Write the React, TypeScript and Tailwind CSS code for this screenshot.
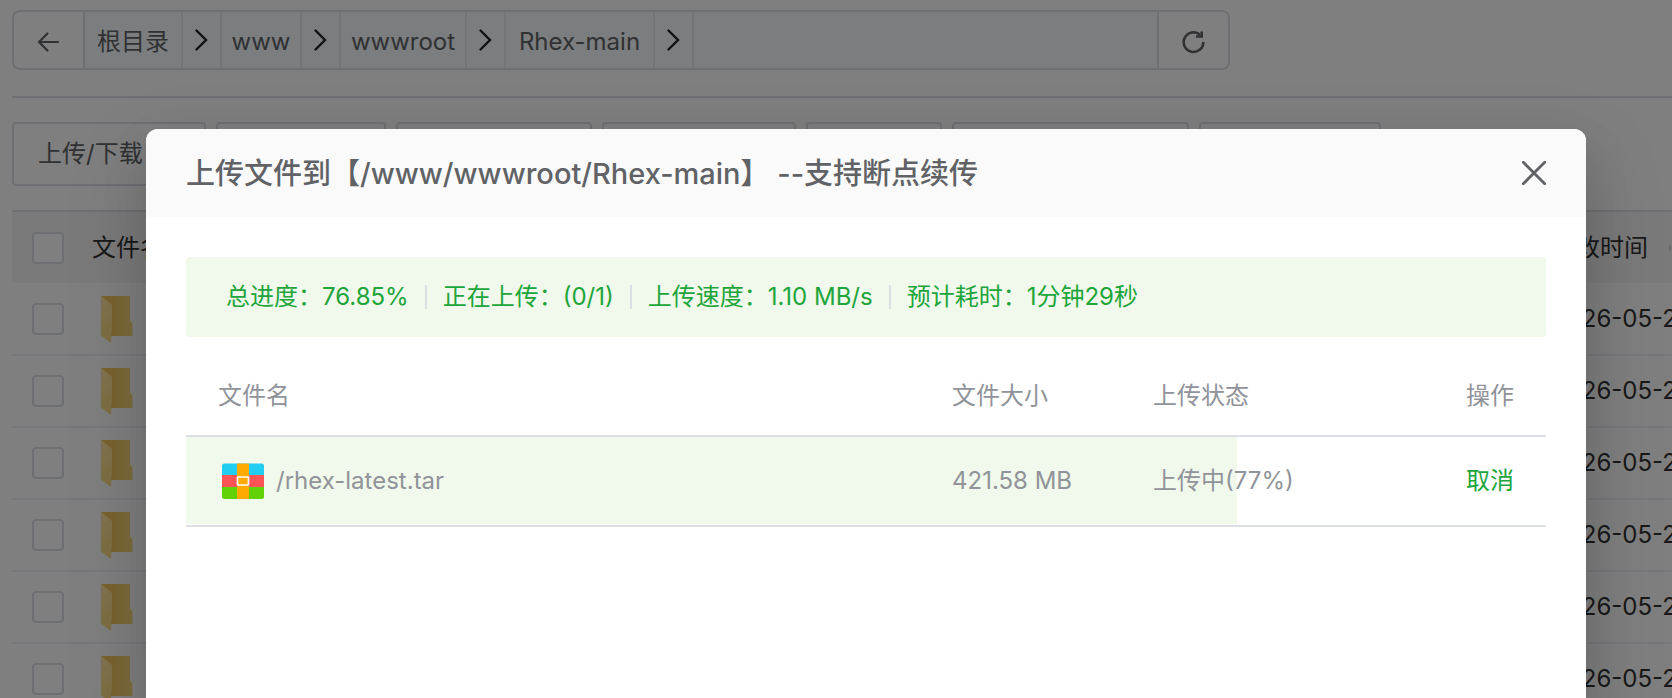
import { type ReactNode, Fragment } from 'react'

const crumbs = [
  { label: '根目录', width: 'w-[98px]' },
  { label: 'www', width: 'w-[80px]' },
  { label: 'wwwroot', width: 'w-[126px]' },
  { label: 'Rhex-main', width: 'w-[149px]' },
]

const tools = [
  { id: 'transfer', label: '上传/下载', width: 'w-[194px]' },
  { id: 'tool-2', label: '', width: 'w-[170px]' },
  { id: 'tool-3', label: '', width: 'w-[196px]' },
  { id: 'tool-4', label: '', width: 'w-[194px]' },
  { id: 'tool-5', label: '', width: 'w-[136px]' },
  { id: 'tool-6', label: '', width: 'w-[237px]' },
  { id: 'tool-7', label: '', width: 'w-[182px]' },
]

const folders = [1, 2, 3, 4, 5, 6].map((id) => ({ id, modified: '2026-05-2' }))

const uploads = [{ name: '/rhex-latest.tar', size: '421.58 MB', progress: 77.3 }]

const stats = [
  '总进度：76.85%',
  '正在上传：(0/1)',
  '上传速度：1.10 MB/s',
  '预计耗时：1分钟29秒',
]

function ChevronIcon() {
  return (
    <svg className="h-6 w-4" viewBox="0 0 16 24" fill="none" stroke="#222" strokeWidth="2.4" strokeLinecap="round" aria-hidden>
      <path d="M2.500 2.500L12 12L2.500 21.500" />
    </svg>
  )
}

function BackIcon() {
  return (
    <svg className="h-6 w-6" viewBox="0 0 24 24" fill="none" stroke="#606266" strokeWidth="2.2" strokeLinecap="round" aria-hidden>
      <path d="M21 12H2M10.500 3.500L2 12L10.500 20.500" />
    </svg>
  )
}

function RefreshIcon() {
  return (
    <svg className="h-6 w-6" viewBox="0 0 24 24" fill="none" stroke="#606266" strokeWidth="2.6" aria-hidden>
      <path d="M21.300 12A9.800 9.800 0 1 1 18 4.800" />
      <path d="M19.700 1.500V6.500H14" />
    </svg>
  )
}

function CloseIcon() {
  return (
    <svg className="h-6 w-6" viewBox="0 0 24 24" fill="none" stroke="#606266" strokeWidth="2.8" strokeLinecap="round" aria-hidden>
      <path d="M1.300 1.300L22.700 22.700M22.700 1.300L1.300 22.700" />
    </svg>
  )
}

function FolderIcon() {
  return (
    <svg className="h-12 w-8" viewBox="0 0 32 48" aria-hidden>
      <defs>
        <linearGradient id="folder-back" x1="0" y1="0" x2="1" y2="0">
          <stop offset="0.300" stopColor="#f0c55c" />
          <stop offset="1" stopColor="#fbdc80" />
        </linearGradient>
        <linearGradient id="folder-flap" x1="0" y1="0" x2="0" y2="1">
          <stop offset="0" stopColor="#ffe8a4" />
          <stop offset="1" stopColor="#fbda7c" />
        </linearGradient>
      </defs>
      <path d="M0.500 1H29V25.500L31.500 28.500V41H0.500z" fill="url(#folder-back)" />
      <path d="M0.500 1.500L10 9Q11 10 11 12V34L10.200 36V48L1.500 41.500Q0.500 40.500 0.500 39.500z" fill="url(#folder-flap)" />
    </svg>
  )
}

function ArchiveIcon() {
  return (
    <svg className="h-9 w-[42px]" viewBox="0 0 42 36" aria-hidden>
      <path d="M0 12V3Q0 0.500 2.500 0.500H39.500Q42 0.500 42 3V12z" fill="#22cdf2" />
      <path d="M0 12H42V24H0z" fill="#ff5456" />
      <path d="M0 24H42V33.500Q42 36 39.500 36H2.500Q0 36 0 33.500z" fill="#60d207" />
      <path d="M15 0.500H27V36H15z" fill="#ffaa00" />
      <rect x="15.500" y="14" width="11" height="8" rx="0.500" fill="#ffaa00" stroke="#fff" strokeWidth="1.700" />
    </svg>
  )
}

function SortIcon() {
  return (
    <svg className="h-5 w-3" viewBox="0 0 12 20" fill="#c0c4cc" aria-hidden>
      <path d="M6 2L12 8.500H0zM6 18L12 11.500H0z" />
    </svg>
  )
}

function Checkbox({ label }: { label: string }) {
  return (
    <input
      type="checkbox"
      aria-label={label}
      className="block h-8 w-8 appearance-none rounded border-2 border-[#dcdfe6] bg-white"
    />
  )
}

function PathBar() {
  return (
    <nav className="flex h-[60px] w-full max-w-[1218px] overflow-hidden rounded-lg border-2 border-[#dcdfe6]" aria-label="路径">
      <button type="button" aria-label="返回" className="flex w-[71px] items-center justify-center border-r-2 border-[#dcdfe6] pt-1">
        <BackIcon />
      </button>
      <div className="flex flex-1 bg-[#f9fbfd]">
        {crumbs.map((crumb) => (
          <Fragment key={crumb.label}>
            <a
              href="#"
              className={`flex items-center justify-center border-r-2 border-[#e8eaee] pt-1 text-[#606266] ${crumb.width}`}
            >
              {crumb.label}
            </a>
            <span className="flex w-[39px] items-center justify-center border-r-2 border-[#e8eaee]">
              <ChevronIcon />
            </span>
          </Fragment>
        ))}
      </div>
      <button type="button" aria-label="刷新" className="flex w-[71px] items-center justify-center border-l-2 border-[#dcdfe6] pt-1">
        <RefreshIcon />
      </button>
    </nav>
  )
}

function FileTable() {
  return (
    <table className="mt-6 w-full table-fixed border-t-2 border-[#dcdfe6] text-left">
      <colgroup>
        <col className="w-[80px]" />
        <col />
        <col className="w-[120px]" />
      </colgroup>
      <thead>
        <tr className="h-[72px] bg-[#f5f5f5]">
          <th className="pl-5"><Checkbox label="全选" /></th>
          <th className="font-normal">文件名</th>
          <th className="font-normal whitespace-nowrap">
            <span className="flex items-center gap-5">
              修改时间
              <SortIcon />
            </span>
          </th>
        </tr>
      </thead>
      <tbody>
        {folders.map((folder) => (
          <tr key={folder.id} className="h-[72px] border-b-2 border-[#ebeef5]">
            <td className="pl-5"><Checkbox label="选择" /></td>
            <td className="pl-[9px]"><FolderIcon /></td>
            <td className="whitespace-nowrap">{folder.modified}</td>
          </tr>
        ))}
      </tbody>
    </table>
  )
}

function Cell({ children }: { children: ReactNode }) {
  return <td className="px-8 whitespace-nowrap">{children}</td>
}

function UploadDialog() {
  return (
    <section
      role="dialog"
      aria-labelledby="upload-title"
      className="flex-1 overflow-hidden rounded-t-xl bg-white text-[#909399] shadow-[0_32px_80px_8px_rgba(0,0,0,0.12),0_20px_48px_rgba(0,0,0,0.1)]"
    >
      <header className="flex h-[88px] items-center justify-between bg-[#fafafa] px-10">
        <h2 id="upload-title" className="pt-0.5 text-[29px] font-medium whitespace-pre text-[#606266]">
          上传文件到【/www/wwwroot/Rhex-main】 --支持断点续传
        </h2>
        <button type="button" aria-label="关闭">
          <CloseIcon />
        </button>
      </header>
      <div className="p-10">
        <div className="flex h-20 items-center rounded bg-[#f0f9eb] px-10 text-[#20a53a]">
          {stats.map((stat, i) => (
            <Fragment key={stat}>
              {i > 0 && <span className="mx-4 h-6 w-0.5 bg-[#dcdfe6]" />}
              <span>{stat}</span>
            </Fragment>
          ))}
        </div>
        <table className="mt-5 w-full table-fixed text-left">
          <colgroup>
            <col />
            <col className="w-[201px]" />
            <col className="w-[260px]" />
            <col className="w-[165px]" />
          </colgroup>
          <thead>
            <tr className="h-[79px] border-b-2 border-[#dcdfe6]">
              <th className="px-8 font-normal">文件名</th>
              <th className="px-8 font-normal">文件大小</th>
              <th className="px-8 font-normal">上传状态</th>
              <th className="px-8 text-right font-normal">操作</th>
            </tr>
          </thead>
          <tbody>
            {uploads.map((file) => (
              <tr
                key={file.name}
                className="h-[90px] border-b-2 border-[#dcdfe6] bg-[linear-gradient(#f0f9eb,#f0f9eb)] bg-no-repeat"
                style={{ backgroundSize: `${file.progress}% 100%` }}
              >
                <Cell>
                  <span className="flex items-center gap-3 pl-1">
                    <ArchiveIcon />
                    {file.name}
                  </span>
                </Cell>
                <Cell>{file.size}</Cell>
                <Cell>上传中({Math.round(file.progress)}%)</Cell>
                <td className="px-8 text-right">
                  <button type="button" className="text-[#20a53a]">取消</button>
                </td>
              </tr>
            ))}
          </tbody>
        </table>
      </div>
    </section>
  )
}

export default function App() {
  return (
    <div className="relative h-screen overflow-hidden bg-white font-[Inter,'Noto_Sans_CJK_SC',sans-serif] text-2xl text-[#333]">
      <main className="pt-2.5 pl-3">
        <PathBar />
        <hr className="mt-[26px] border-t-2 border-[#dcdfe6]" />
        <div className="mt-6 flex gap-2.5">
          {tools.map((tool) => (
            <button
              key={tool.id}
              type="button"
              className={`h-16 shrink-0 rounded border-2 border-[#dcdfe6] px-6 text-left text-[#606266] ${tool.width}`}
            >
              {tool.label}
            </button>
          ))}
        </div>
        <FileTable />
      </main>
      <div className="absolute inset-0 flex bg-black/50 pt-[129px] pr-[86px] pl-[146px]">
        <UploadDialog />
      </div>
    </div>
  )
}
